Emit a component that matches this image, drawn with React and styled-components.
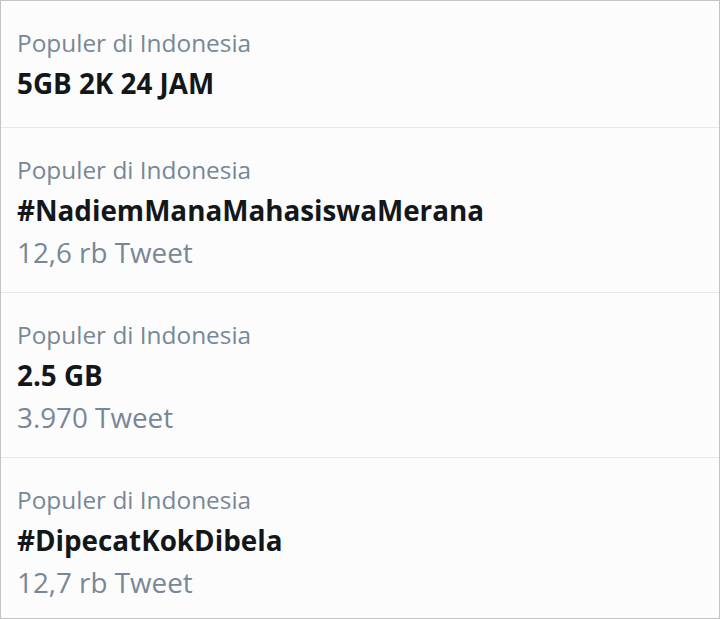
import React from "react";
import styled, { createGlobalStyle } from "styled-components";

const GlobalStyle = createGlobalStyle`
  html, body {
    margin: 0;
    padding: 0;
    background: #ffffff;
  }
  body {
    font-family: "Open Sans", "Noto Sans", "Liberation Sans", sans-serif;
  }
`;

const Panel = styled.section`
  width: 720px;
  height: 619px;
  box-sizing: border-box;
  border: 1px solid #c4c4c4;
  background: #fcfcfc;
  display: flex;
  flex-direction: column;
  overflow: hidden;
`;

const Trend = styled.div`
  box-sizing: border-box;
  height: ${(p) => p.$h}px;
  padding: 21px 16px 0;
  border-top: ${(p) => (p.$first ? "none" : "1px solid #e4e9ee")};
  display: flex;
  flex-direction: column;
`;

const Context = styled.div`
  color: #788796;
  font-size: 24.4px;
  line-height: 41px;
`;

const Name = styled.div`
  color: #14171a;
  font-size: 27.8px;
  font-weight: 700;
  line-height: 41px;
`;

const Count = styled.div`
  color: #788796;
  font-size: 27.8px;
  line-height: 42px;
`;

const trends = [
  { name: "5GB 2K 24 JAM", h: 126 },
  { name: "#NadiemManaMahasiswaMerana", count: "12,6 rb Tweet", h: 165 },
  { name: "2.5 GB", count: "3.970 Tweet", h: 165 },
  { name: "#DipecatKokDibela", count: "12,7 rb Tweet", h: 161 },
];

export default function App() {
  return (
    <>
      <GlobalStyle />
      <Panel>
        {trends.map((t, i) => (
          <Trend key={t.name} $first={i === 0} $h={t.h}>
            <Context>Populer di Indonesia</Context>
            <Name>{t.name}</Name>
            {t.count && <Count>{t.count}</Count>}
          </Trend>
        ))}
      </Panel>
    </>
  );
}
